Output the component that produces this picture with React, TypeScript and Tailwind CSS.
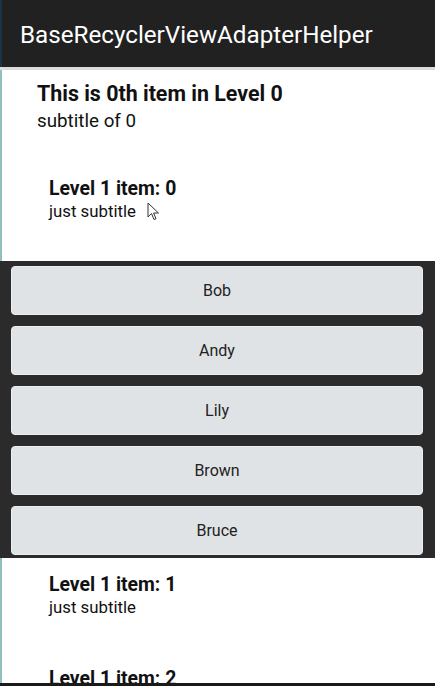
import React from "react";

const names = ["Bob", "Andy", "Lily", "Brown", "Bruce"];

function Level1({ n }: { n: number }) {
  return (
    <div className="h-[94px] pl-[47px] pt-[15px]">
      <div className="text-[19.4px] font-bold leading-[24px] text-[#111]">Level 1 item: {n}</div>
      <div className="text-[16.8px] leading-[22px] -mt-[1px] text-[#111]">just subtitle</div>
    </div>
  );
}

export default function App() {
  return (
    <div
      className="relative w-[435px] h-[686px] overflow-hidden bg-white"
      style={{ fontFamily: "Roboto, 'Noto Sans', sans-serif" }}
    >
      <div className="h-[67px] bg-[#212121] flex items-center pl-[18px] pt-[3px] border-l-2 border-[#1d3347]">
        <span className="text-white text-[24.2px] leading-none">BaseRecyclerViewAdapterHelper</span>
      </div>
      <div className="h-[3px] bg-[#dcdcdc]" />
      <div className="border-l-2 border-[#8fc0c0]">
        <div className="h-[92px] pl-[35px] pt-[11px]">
          <div className="text-[21.4px] font-bold leading-[26px] text-[#111]">This is 0th item in Level 0</div>
          <div className="text-[18.8px] leading-[24px] mt-[2px] text-[#111]">subtitle of 0</div>
        </div>
        <div className="relative h-[99px] pl-[47px] pt-[15px]">
          <div className="text-[19.4px] font-bold leading-[24px] text-[#111]">Level 1 item: 0</div>
          <div className="text-[16.8px] leading-[22px] -mt-[1px] text-[#111]">just subtitle</div>
          <svg className="absolute left-[145px] top-[40px]" width="14" height="20" viewBox="0 0 14 20">
            <path d="M1 1 L1 15 L4.5 11.5 L7 17.5 L9 16.7 L6.6 11 L11.5 11 Z" fill="#fff" stroke="#333" strokeWidth="1" strokeLinejoin="round" />
          </svg>
        </div>
      </div>
      <div className="bg-[#2b2b2b] h-[297px] pl-[11px] pr-[12px] pt-[5px] flex flex-col gap-[11px]">
        {names.map((n) => (
          <div
            key={n}
            className="h-[49px] rounded-[4px] bg-[#e0e3e6] border border-[#eceef0] flex items-center justify-center text-[16px] text-[#222]"
          >
            {n}
          </div>
        ))}
      </div>
      <div className="border-l-2 border-[#8fc0c0]">
        <Level1 n={1} />
        <Level1 n={2} />
      </div>
      <div className="absolute left-0 right-0 bottom-0 h-[3px] bg-[#1a1a1a]" />
    </div>
  );
}
